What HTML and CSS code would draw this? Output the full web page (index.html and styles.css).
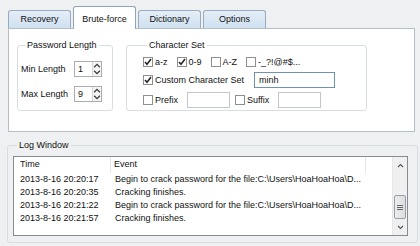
FILE: index.html
```html
<!DOCTYPE html>
<html lang="en">
    <head>
        <meta charset="UTF-8">
        <title>Password Recovery</title>
        <link rel="stylesheet" href="styles.css">
    </head>
    <body>
        <div class="window">
            <div class="tabs">
                <div class="tab">Recovery</div>
                <div class="tab active">Brute-force</div>
                <div class="tab">Dictionary</div>
                <div class="tab">Options</div>
            </div>
            <div class="panel">
                <fieldset class="group pw-group">
                    <legend>Password Length</legend>
                    <div class="pw-grid">
                        <span>Min Length</span>
                        <div class="spin">
                            <span class="spin-val">1</span>
                            <span class="spin-btns">
                                <svg width="7" height="6" viewBox="0 0 7 6"><path d="M1 4.5 L3.5 2 L6 4.5" fill="none" stroke="#3a3a3a" stroke-width="1.1"/></svg>
                                <svg width="7" height="6" viewBox="0 0 7 6"><path d="M1 1.5 L3.5 4 L6 1.5" fill="none" stroke="#3a3a3a" stroke-width="1.1"/></svg>
                            </span>
                        </div>
                        <span>Max Length</span>
                        <div class="spin">
                            <span class="spin-val">9</span>
                            <span class="spin-btns">
                                <svg width="7" height="6" viewBox="0 0 7 6"><path d="M1 4.5 L3.5 2 L6 4.5" fill="none" stroke="#3a3a3a" stroke-width="1.1"/></svg>
                                <svg width="7" height="6" viewBox="0 0 7 6"><path d="M1 1.5 L3.5 4 L6 1.5" fill="none" stroke="#3a3a3a" stroke-width="1.1"/></svg>
                            </span>
                        </div>
                    </div>
                </fieldset>
                <fieldset class="group cs-group">
                    <legend>Character Set</legend>
                    <div class="cs-row">
                        <span class="opt"><span class="cb"><svg width="8" height="8" viewBox="0 0 8 8"><path d="M1 4 L3 6.3 L7 1" fill="none" stroke="#222" stroke-width="1.5"/></svg></span>a-z</span>
                        <span class="opt"><span class="cb"><svg width="8" height="8" viewBox="0 0 8 8"><path d="M1 4 L3 6.3 L7 1" fill="none" stroke="#222" stroke-width="1.5"/></svg></span>0-9</span>
                        <span class="opt"><span class="cb"></span>A-Z</span>
                        <span class="opt"><span class="cb"></span>-_?!@#$...</span>
                    </div>
                    <div class="cs-row">
                        <span class="opt custom"><span class="cb"><svg width="8" height="8" viewBox="0 0 8 8"><path d="M1 4 L3 6.3 L7 1" fill="none" stroke="#222" stroke-width="1.5"/></svg></span>Custom Character Set</span>
                        <span class="text-box focus wide">minh</span>
                    </div>
                    <div class="cs-row last">
                        <span class="opt"><span class="cb"></span>Prefix</span>
                        <span class="text-box small"></span>
                        <span class="opt"><span class="cb"></span>Suffix</span>
                        <span class="text-box small"></span>
                    </div>
                </fieldset>
            </div>
            <fieldset class="group log-group">
                <legend>Log Window</legend>
                <div class="list">
                    <div class="list-main">
                        <div class="list-head">
                            <span class="col-time">Time</span>
                            <span class="col-event">Event</span>
                            <span class="col-rest"></span>
                        </div>
                        <div class="list-row"><span class="col-time">2013-8-16 20:20:17</span><span class="col-event">Begin to crack password for the file:C:\Users\HoaHoaHoa\D...</span></div>
                        <div class="list-row"><span class="col-time">2013-8-16 20:20:35</span><span class="col-event">Cracking finishes.</span></div>
                        <div class="list-row"><span class="col-time">2013-8-16 20:21:22</span><span class="col-event">Begin to crack password for the file:C:\Users\HoaHoaHoa\D...</span></div>
                        <div class="list-row"><span class="col-time">2013-8-16 20:21:57</span><span class="col-event">Cracking finishes.</span></div>
                    </div>
                    <div class="scroll">
                        <div class="scroll-btn">
                            <svg width="7" height="5" viewBox="0 0 7 5"><path d="M1 4 L3.5 1.5 L6 4" fill="none" stroke="#555" stroke-width="1.1"/></svg>
                        </div>
                        <div class="scroll-track">
                            <div class="thumb">
                                <svg width="6" height="5" viewBox="0 0 6 5"><path d="M0 0.5 H6 M0 2.5 H6 M0 4.5 H6" stroke="#666" stroke-width="1"/></svg>
                            </div>
                        </div>
                        <div class="scroll-btn">
                            <svg width="7" height="5" viewBox="0 0 7 5"><path d="M1 1 L3.5 3.5 L6 1" fill="none" stroke="#555" stroke-width="1.1"/></svg>
                        </div>
                    </div>
                </div>
            </fieldset>
        </div>
    </body>
</html>
```

FILE: styles.css
```css
*{
    box-sizing:border-box;
}
body{
    margin:0;
    background:#eef0f2;
    font-family:"Liberation Sans",Arial,sans-serif;
    font-size:9px;
    color:#111;
}
.window{
    padding:6px 2px 0 7px;
}

/* tabs */
.tabs{
    display:flex;
    align-items:flex-end;
    gap:2px;
    height:22px;
    margin-left:1px;
}
.tab{
    width:63px;
    height:18px;
    line-height:17px;
    text-align:center;
    border:1px solid #9aabbd;
    border-bottom:none;
    border-radius:3px 3px 0 0;
    background:linear-gradient(#e4eef8,#cfe0f0);
}
.tab.active{
    height:23px;
    margin-bottom:-1px;
    padding-top:4px;
    background:#fff;
    border-color:#8ea3b8;
    position:relative;
    z-index:1;
}
.panel{
    width:407px;
    height:104px;
    margin-left:1px;
    border:1px solid #b4bec8;
    background:#fff;
    display:flex;
    align-items:flex-start;
    gap:13px;
    padding:11px 0 0 8px;
}

/* group boxes */
.group{
    margin:0;
    min-width:0;
    border:1px solid #d8dde2;
    border-radius:3px;
}
.group legend{
    padding:0 2px;
    margin-left:4px;
    line-height:11px;
}
.pw-group{
    width:96px;
    height:71px;
    padding:10px 0 0 3px;
}
.pw-grid{
    display:grid;
    grid-template-columns:53px 28px;
    grid-auto-rows:16px;
    row-gap:9px;
    align-items:center;
}
.spin{
    height:16px;
    border:1px solid #abadb3;
    display:flex;
    background:#fff;
}
.spin-val{
    flex:1;
    padding-left:3px;
    line-height:14px;
}
.spin-btns{
    width:9px;
    display:flex;
    flex-direction:column;
    border-left:1px solid #d4d6da;
    background:#f4f4f4;
}
.spin-btns svg{
    display:block;
    flex:1;
    width:8px;
}
.cs-group{
    width:241px;
    height:71px;
    padding:3px 0 0 16px;
    display:flex;
    flex-direction:column;
    gap:2px;
}
.cs-row{
    display:flex;
    align-items:center;
    height:16px;
    gap:9px;
}
.cs-row.last{
    margin-top:2px;
    gap:0;
}
.opt{
    display:flex;
    align-items:center;
    gap:2px;
    white-space:nowrap;
}
.cb{
    width:10px;
    height:10px;
    border:1px solid #8e8f8f;
    background:#fff;
    display:flex;
    align-items:center;
    justify-content:center;
}
.custom{
    width:102px;
}
.text-box{
    height:16px;
    border:1px solid #c3c6ca;
    background:#fff;
    line-height:14px;
    padding-left:4px;
}
.text-box.focus{
    border-color:#6f91b6;
}
.wide{
    width:81px;
}
.small{
    width:43px;
    margin:0 5px 0 9px;
}

/* log window */
.log-group{
    width:411px;
    height:103px;
    margin-top:8px;
    padding:5px 9px 0 5px;
}
.list{
    height:80px;
    border:1px solid #868c94;
    background:#fff;
    display:flex;
}
.list-main{
    flex:1;
    overflow:hidden;
}
.list-head,.list-row{
    display:flex;
    white-space:nowrap;
}
.list-head{
    height:16px;
    line-height:15px;
}
.list-row{
    height:13px;
    line-height:13px;
}
.col-time{
    width:97px;
    flex:none;
    padding-left:6px;
}
.col-event{
    width:255px;
    flex:none;
    padding-left:4px;
    overflow:hidden;
}
.list-head .col-time,.list-head .col-event{
    border-right:1px solid #e3e5e8;
}
.list-head .col-event{
    padding-left:3px;
}
.col-rest{
    flex:1;
}
.scroll{
    width:15px;
    display:flex;
    flex-direction:column;
    background:#f0f0f0;
    border-left:1px solid #e6e6e6;
}
.scroll-btn{
    height:16px;
    display:flex;
    align-items:center;
    justify-content:center;
}
.scroll-track{
    flex:1;
    display:flex;
    flex-direction:column;
    justify-content:flex-end;
}
.thumb{
    height:24px;
    margin:0 1px;
    border:1px solid #9a9ea4;
    border-radius:2px;
    background:linear-gradient(90deg,#eceded,#dcdde0);
    display:flex;
    align-items:center;
    justify-content:center;
}
```
